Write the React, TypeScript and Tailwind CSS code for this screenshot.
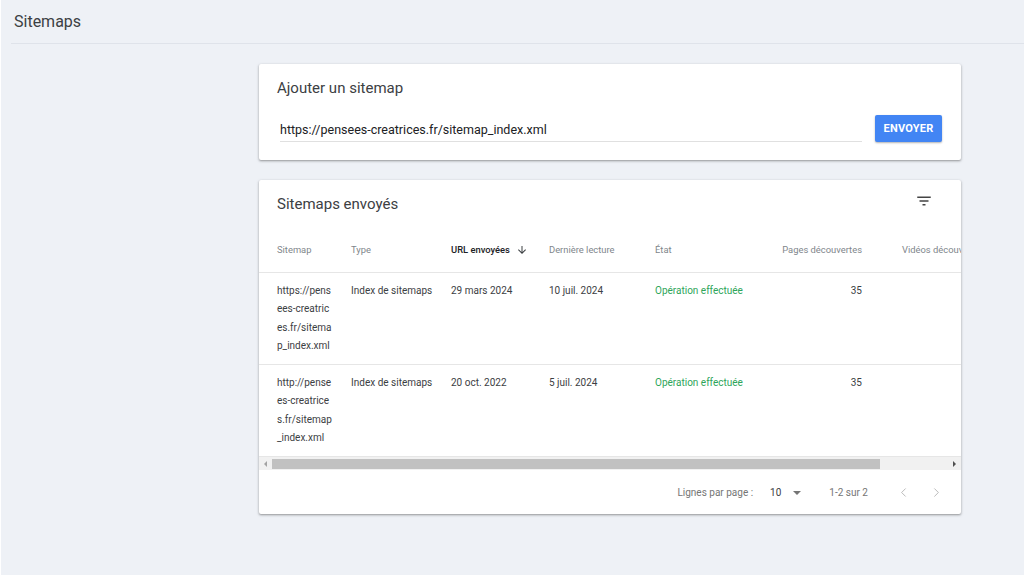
import { ChevronLeft, ChevronRight } from 'lucide-react'

interface SitemapRow {
  url: string
  type: string
  sent: string
  read: string
  status: string
  pages: string
}

const rows: SitemapRow[] = [
  {
    url: 'https://pensees-creatrices.fr/sitemap_index.xml',
    type: 'Index de sitemaps',
    sent: '29 mars 2024',
    read: '10 juil. 2024',
    status: 'Opération effectuée',
    pages: '35',
  },
  {
    url: 'http://pensees-creatrices.fr/sitemap_index.xml',
    type: 'Index de sitemaps',
    sent: '20 oct. 2022',
    read: '5 juil. 2024',
    status: 'Opération effectuée',
    pages: '35',
  },
]

const cols = 'grid grid-cols-[92px_100px_98px_106px_115px_92px_140px] w-[743px]'

function FilterIcon() {
  return (
    <svg width="18" height="18" viewBox="0 0 24 24" fill="#444">
      <path d="M10 18h4v-2h-4v2zM3 6v2h18V6H3zm3 7h12v-2H6v2z" />
    </svg>
  )
}

function ArrowDown() {
  return (
    <svg width="12" height="12" viewBox="0 0 24 24" fill="#3c4043">
      <path d="M20 12l-1.41-1.41L13 16.17V4h-2v12.17l-5.58-5.59L4 12l8 8 8-8z" />
    </svg>
  )
}

export default function App() {
  return (
    <div className="h-[576px] w-[1024px] overflow-hidden bg-[#eef1f6] border-l border-b border-white font-['Roboto',sans-serif] text-[#333]">
      {/* en-tête */}
      <div className="ml-[10px] h-[44px] border-b border-[#dfe3ea] flex items-center">
        <h1 className="pl-[3px] text-[16px] text-[#3c4043]">Sitemaps</h1>
      </div>

      <div className="ml-[258px] w-[702px] pt-[20px] flex flex-col gap-[20px]">
        {/* Ajouter un sitemap */}
        <div className="bg-white rounded-[2px] shadow-[0_1px_2px_rgba(0,0,0,0.3),0_1px_3px_1px_rgba(0,0,0,0.08)] pt-[14px] pl-[18px] pr-[19px] pb-[18px]">
          <h2 className="h-[20px] leading-[20px] text-[15px] text-[#3c4043]">Ajouter un sitemap</h2>
          <div className="mt-[17px] flex items-center gap-[13px]">
            <div className="ml-[3px] flex-1 h-[26px] border-b border-[#e0e0e0] flex items-center pt-[4px] text-[12.5px] text-[#202124]">
              https://pensees-creatrices.fr/sitemap_index.xml
            </div>
            <button className="h-[27px] w-[67px] pt-[1px] rounded-[2px] bg-[#4285f4] text-white text-[11px] font-bold tracking-[0.2px] shadow-[0_1px_2px_rgba(0,0,0,0.3)]">
              ENVOYER
            </button>
          </div>
        </div>

        {/* Sitemaps envoyés */}
        <div className="bg-white rounded-[2px] shadow-[0_1px_2px_rgba(0,0,0,0.3),0_1px_3px_1px_rgba(0,0,0,0.08)]">
          <div className="h-[49px] pl-[18px] pr-[25px] flex items-center justify-between">
            <h2 className="text-[15px] text-[#3c4043]">Sitemaps envoyés</h2>
            <div className="w-[24px] h-[24px] -mt-[7px] flex items-center justify-center">
              <FilterIcon />
            </div>
          </div>

          <div className="overflow-hidden">
            <div className={`${cols} h-[44px] items-center border-b border-[#e6e6e6] text-[9.4px] text-[#80868b]`}>
              <div className="pl-[18px]">Sitemap</div>
              <div>Type</div>
              <div className="flex items-center gap-[6px] text-[#202124] font-medium">
                URL envoyées <ArrowDown />
              </div>
              <div>Dernière lecture</div>
              <div>État</div>
              <div className="text-right">Pages découvertes</div>
              <div className="pl-[40px] whitespace-nowrap">Vidéos découvertes</div>
            </div>

            {rows.map((row) => (
              <div
                key={row.url}
                className={`${cols} h-[92px] pt-[9px] border-b border-[#e6e6e6] text-[10px] leading-[18.4px] text-[#3c4043]`}
              >
                <div className="pl-[18px]">
                  <div className="w-[55px] break-all">{row.url}</div>
                </div>
                <div>{row.type}</div>
                <div>{row.sent}</div>
                <div>{row.read}</div>
                <div className="text-[#2ea55a]">{row.status}</div>
                <div className="text-right">{row.pages}</div>
                <div></div>
              </div>
            ))}
          </div>

          {/* barre de défilement */}
          <div className="h-[13px] bg-[#f1f1f1] flex items-center">
            <div className="w-[13px] flex justify-center">
              <div className="w-0 h-0 border-y-[3px] border-y-transparent border-r-[3px] border-r-[#a3a3a3]" />
            </div>
            <div className="h-[10px] w-[608px] bg-[#c1c1c1]" />
            <div className="flex-1" />
            <div className="w-[13px] flex justify-center">
              <div className="w-0 h-0 border-y-[3px] border-y-transparent border-l-[3px] border-l-[#505050]" />
            </div>
          </div>

          {/* pagination */}
          <div className="h-[44px] pt-[1px] pr-[13px] flex items-center justify-end text-[10px] text-[#757575]">
            <span>Lignes par page :</span>
            <span className="ml-[17px] text-[#3c4043]">10</span>
            <div className="ml-[12px] w-0 h-0 border-x-[4px] border-x-transparent border-t-[4px] border-t-[#757575]" />
            <span className="ml-[28px]">1-2 sur 2</span>
            <div className="ml-[23px] w-[24px] flex justify-center">
              <ChevronLeft size={15} strokeWidth={1.25} color="#a8a8a8" />
            </div>
            <div className="ml-[9px] w-[24px] flex justify-center">
              <ChevronRight size={15} strokeWidth={1.25} color="#a8a8a8" />
            </div>
          </div>
        </div>
      </div>
    </div>
  )
}
